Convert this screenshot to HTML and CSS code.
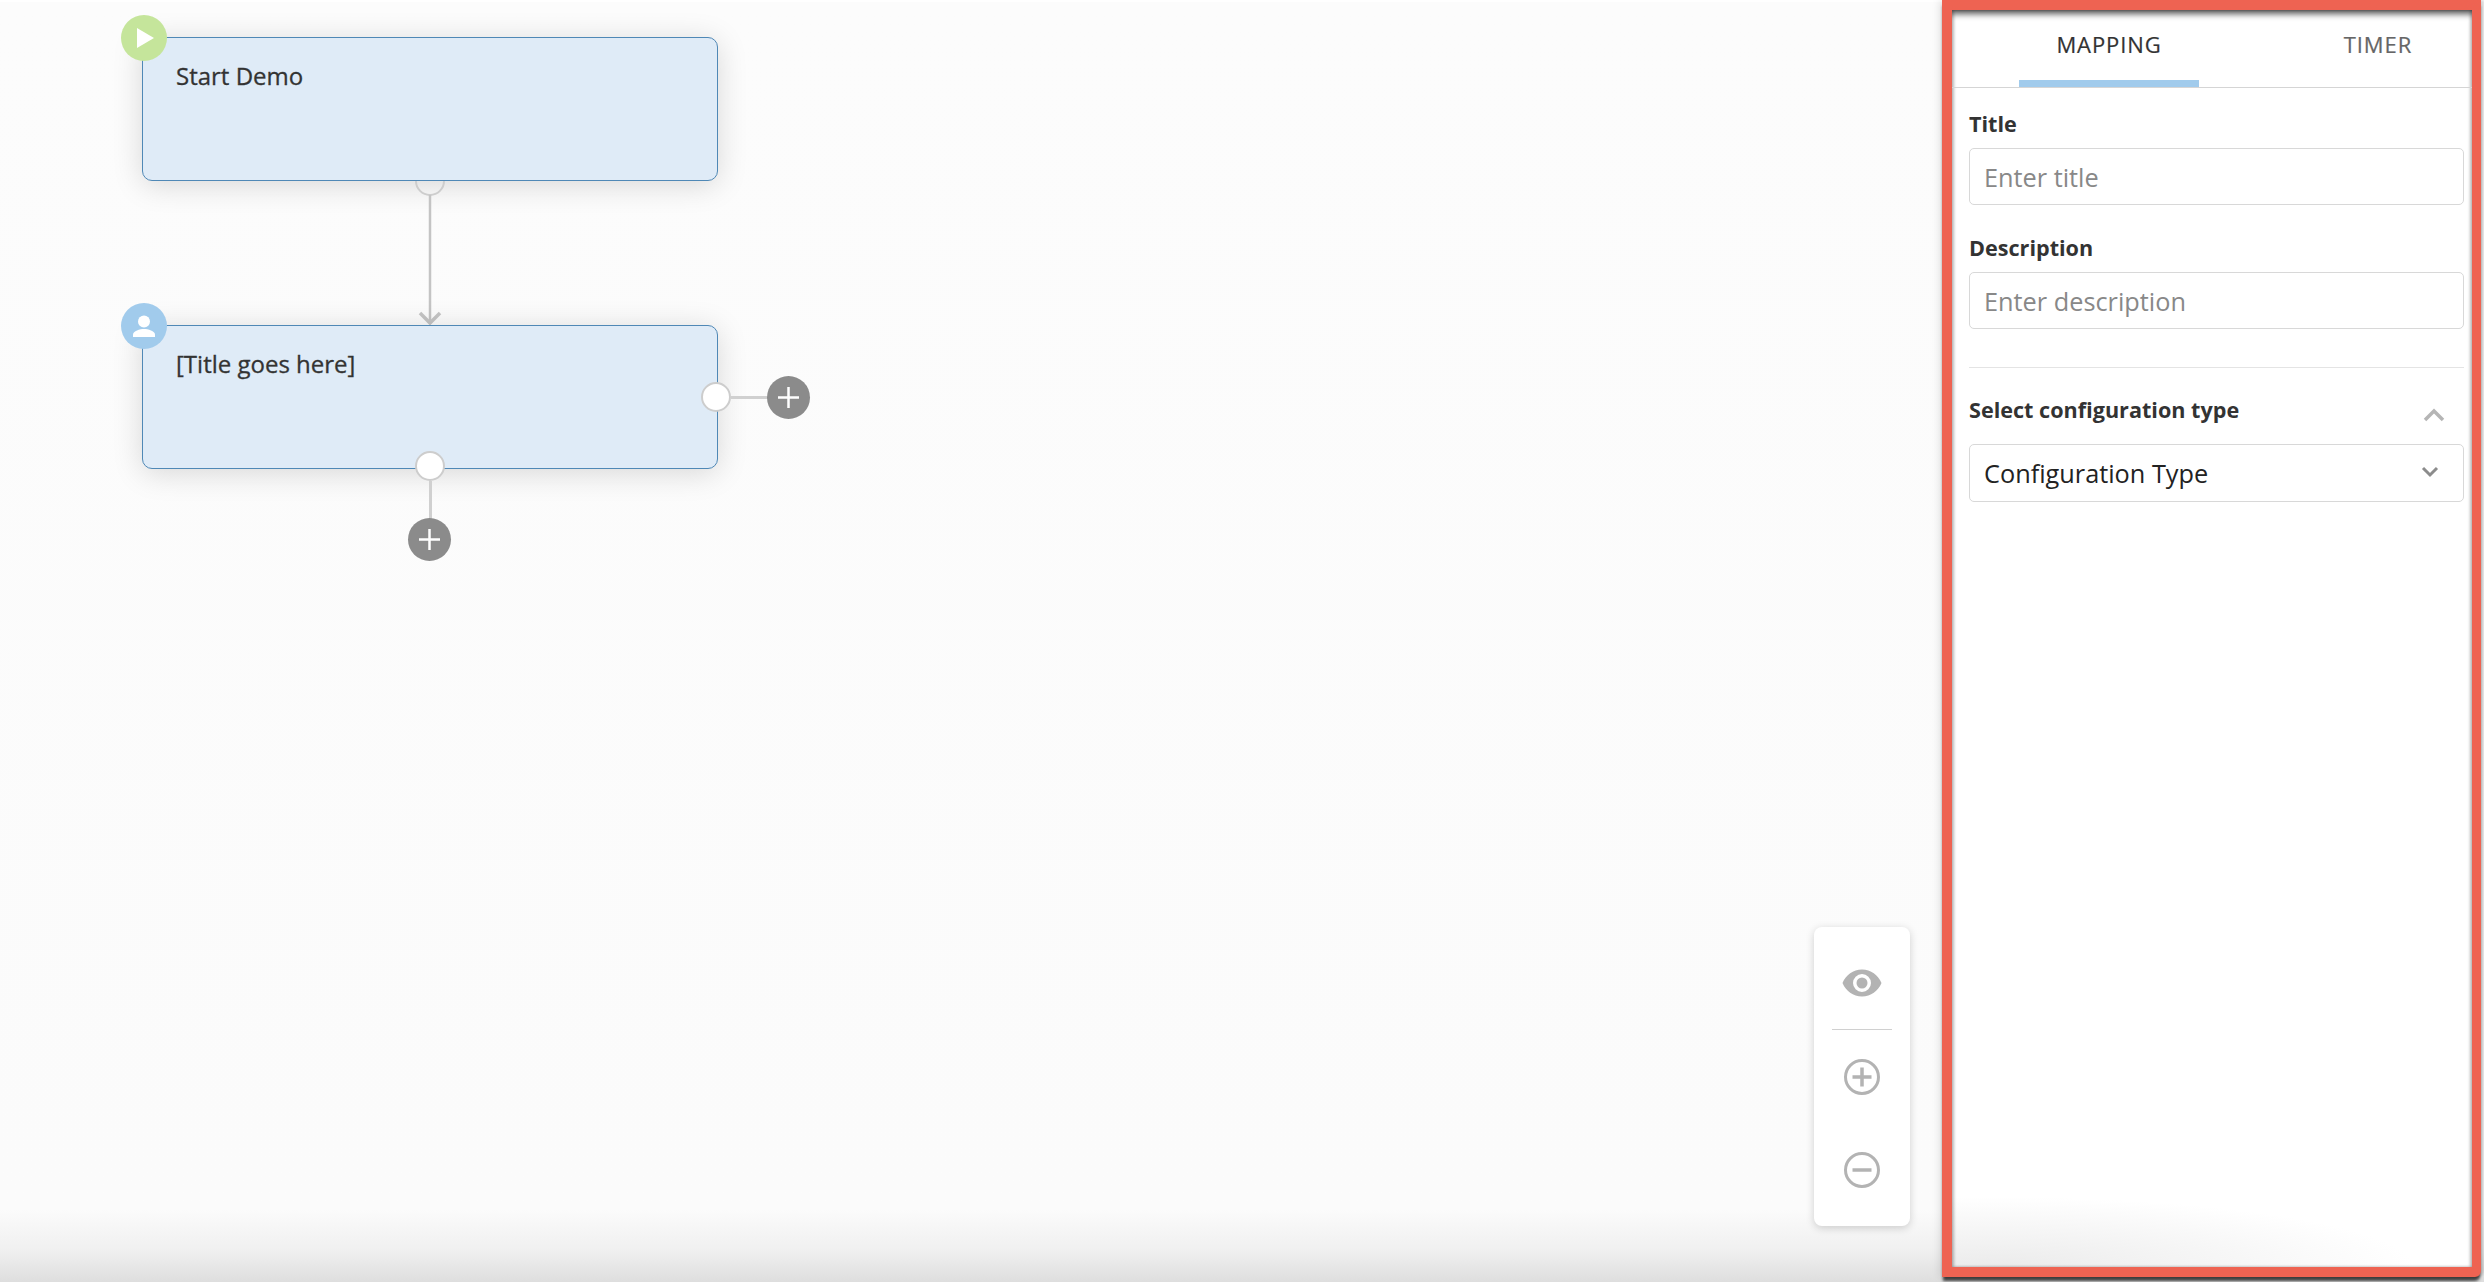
FILE: index.html
```html
<!DOCTYPE html>
<html lang="en">
<head>
<meta charset="UTF-8" />
<title>Flow editor</title>
<link rel="stylesheet" href="styles.css">
</head>
<body>
  <div class="page">
    <main class="canvas">
      <!-- nodes sit on a free canvas -->
      <div class="card card-start">
        <span class="badge badge-green">
          <svg width="46" height="46" viewBox="0 0 46 46"><polygon points="16,13 16,33 33,23" fill="#fff"/></svg>
        </span>
        <span class="card-title">Start Demo</span>
      </div>
      <span class="port port-half"></span>
      <svg class="arrow" width="24" height="132" viewBox="0 0 24 132" fill="none" stroke="#c4c4c4">
        <path d="M12 0V128" stroke-width="2.500"/>
        <path d="M2 118L12 128L22 118" stroke-width="3.500"/>
      </svg>

      <div class="card card-step">
        <span class="badge badge-blue">
          <svg width="46" height="46" viewBox="0 0 46 46" fill="#fff">
            <circle cx="23" cy="18.500" r="6"/>
            <path d="M12 34v-2.500c0-3.500 7-5.500 11-5.500s11 2 11 5.500V34z"/>
          </svg>
        </span>
        <span class="card-title">[Title goes here]</span>
      </div>
      <span class="port port-bottom"></span>
      <span class="wire wire-v"></span>
      <span class="add add-bottom">
        <svg width="43" height="43" viewBox="0 0 43 43"><path d="M21.500 11v21M11 21.500h21" stroke="#fff" stroke-width="2.500"/></svg>
      </span>
      <span class="port port-right"></span>
      <span class="wire wire-h"></span>
      <span class="add add-right">
        <svg width="43" height="43" viewBox="0 0 43 43"><path d="M21.500 11v21M11 21.500h21" stroke="#fff" stroke-width="2.500"/></svg>
      </span>

      <div class="zoom-box">
        <button class="zoom-btn">
          <svg width="40" height="28" viewBox="0 0 40 28"><path fill-rule="evenodd" fill="#b3b3b3" d="M20 0.500C11 0.500 4 6 0.500 14 4 22 11 27.500 20 27.500S36 22 39.500 14C36 6 29 0.500 20 0.500ZM20 23a9 9 0 1 1 0-18 9 9 0 0 1 0 18Z"/><circle cx="20" cy="14" r="5.500" fill="#b3b3b3"/></svg>
        </button>
        <hr class="zoom-line">
        <button class="zoom-btn">
          <svg width="38" height="38" viewBox="0 0 38 38" fill="none" stroke="#b3b3b3"><circle cx="19" cy="19" r="16.500" stroke-width="3"/><path d="M19 9.500v19M9.500 19h19" stroke-width="3.500"/></svg>
        </button>
        <button class="zoom-btn">
          <svg width="38" height="38" viewBox="0 0 38 38" fill="none" stroke="#b3b3b3"><circle cx="19" cy="19" r="16.500" stroke-width="3"/><path d="M9.500 19h19" stroke-width="3.500"/></svg>
        </button>
      </div>
    </main>

    <aside class="panel">
      <div class="tabs">
        <div class="tab tab-active">MAPPING</div>
        <div class="tab">TIMER</div>
      </div>
      <div class="panel-body">
        <label class="field-label">Title</label>
        <div class="text-box placeholder">Enter title</div>
        <label class="field-label label-second">Description</label>
        <div class="text-box placeholder">Enter description</div>
        <hr class="divider">
        <div class="section-head">
          <span class="field-label">Select configuration type</span>
          <svg class="chev-up" width="22" height="14" viewBox="0 0 22 14"><path d="M2 12L11 3L20 12" fill="none" stroke="#b5b5b5" stroke-width="3.500"/></svg>
        </div>
        <div class="text-box select-box">
          <span>Configuration Type</span>
          <svg width="18" height="12" viewBox="0 0 18 12"><path d="M2 2L9 9L16 2" fill="none" stroke="#8c8c8c" stroke-width="3"/></svg>
        </div>
      </div>
    </aside>
  </div>
</body>
</html>
```
FILE: styles.css
```css
/* Reset & base */
* {
  box-sizing: border-box;
}
html, body {
  height: 100%;
  margin: 0;
  font-family: "Open Sans", "Noto Sans", sans-serif;
  color: #333;
}
body {
  background: #fcfcfc;
  overflow: hidden;
}

.page {
  display: flex;
  height: 1282px;
  padding: 0 3px 5px 0;
  background: linear-gradient(to bottom, #fff 0, #fff 2px, #fcfcfc 2px, #fbfbfb 1210px, #f0f0f0 1250px, #dedede 1282px);
}

/* Canvas */
.canvas {
  position: relative;
  flex: 1;
}

.card {
  position: absolute;
  left: 142px;
  width: 576px;
  height: 144px;
  padding: 22px 32px 0 33px;
  background: #dfebf7;
  border: 1.500px solid #4f88b6;
  border-radius: 10px;
  box-shadow: 0 4px 30px rgba(0,0,0,0.15);
}
.card-start {
  top: 37px;
  border-top-left-radius: 0;
}
.card-step {
  top: 325px;
  border-top-left-radius: 0;
}
.card-title {
  display: block;
  font-size: 24px;
  line-height: 32px;
  -webkit-text-stroke: 0.3px #333;
}

.badge {
  position: absolute;
  left: -22px;
  top: -23px;
  width: 46px;
  height: 46px;
  border-radius: 50%;
}
.badge svg {
  display: block;
}
.badge-green {
  background: #c5e59b;
}
.badge-blue {
  background: #a1cbec;
}

.port {
  position: absolute;
  width: 30px;
  height: 30px;
  background: #fff;
  border: 2px solid #cdcdcd;
  border-radius: 50%;
}
.port-half {
  left: 415px;
  top: 166px;
  background: transparent;
  clip-path: inset(15px 0 0 0);
}
.port-bottom {
  left: 415px;
  top: 451px;
}
.port-right {
  left: 701px;
  top: 382px;
}

.arrow {
  position: absolute;
  left: 418px;
  top: 195px;
}

.wire {
  position: absolute;
  background: #d0d0d0;
}
.wire-v {
  left: 429px;
  top: 481px;
  width: 3px;
  height: 38px;
}
.wire-h {
  left: 731px;
  top: 396px;
  width: 38px;
  height: 3px;
}

.add {
  position: absolute;
  width: 43px;
  height: 43px;
  background: #8b8b8b;
  border-radius: 50%;
}
.add svg {
  display: block;
}
.add-bottom {
  left: 408px;
  top: 518px;
}
.add-right {
  left: 767px;
  top: 376px;
}

/* Zoom controls */
.zoom-box {
  position: absolute;
  left: 1814px;
  top: 927px;
  width: 96px;
  height: 299px;
  display: flex;
  flex-direction: column;
  align-items: center;
  padding-top: 36px;
  background: #fff;
  border-radius: 8px;
  box-shadow: 0 2px 8px rgba(0,0,0,0.18);
}
.zoom-btn {
  display: flex;
  justify-content: center;
  align-items: center;
  width: 60px;
  height: 40px;
  padding: 0;
  background: none;
  border: none;
}
.zoom-line {
  width: 60px;
  height: 0;
  margin: 26px 0 27px;
  border: none;
  border-top: 1.500px solid #d0d0d0;
}
.zoom-btn + .zoom-btn {
  margin-top: 53px;
}

/* Side panel */
.panel {
  width: 539px;
  background: #fff;
  border: solid #ee6352;
  border-width: 10px 9px 10px 10px;
  border-radius: 0 0 6px 0;
  box-shadow: -2px 0 8px rgba(0,0,0,0.12), 0 5px 3px -1px rgba(0,0,0,0.7), 3px 0 2px rgba(0,0,0,0.12),
    inset 0 7px 6px -3px rgba(0,0,0,0.65), inset 2px 0 3px rgba(0,0,0,0.2), inset -2px 0 3px rgba(0,0,0,0.2);
  background-image: radial-gradient(ellipse 420px 70px at 8% 100%, #ebebeb 0, rgba(255,255,255,0) 100%);
}

.tabs {
  display: flex;
  height: 78px;
  padding-left: 67px;
  border-bottom: 1.500px solid #d5d5d5;
}
.tab {
  width: 180px;
  height: 77px;
  padding-top: 19px;
  font-size: 22px;
  line-height: 30px;
  letter-spacing: 0.9px;
  text-align: center;
  color: #666;
  -webkit-text-stroke: 0.2px #666;
}
.tab + .tab {
  margin-left: 89px;
}
.tab-active {
  color: #333;
  -webkit-text-stroke-color: #333;
  border-bottom: 7px solid #a1cbec;
}

.panel-body {
  padding: 21px 8px 0 17px;
}

.field-label {
  display: block;
  font-size: 21.600px;
  font-weight: 700;
  line-height: 30px;
}
.label-second {
  margin-top: 28px;
}

.text-box {
  height: 57px;
  margin-top: 9px;
  padding: 1px 14px 0;
  font-size: 25.300px;
  line-height: 55px;
  background: #fff;
  border: 1.500px solid #d8d8d8;
  border-radius: 5px;
}
.placeholder {
  color: #888;
}

.divider {
  height: 0;
  margin: 38px 0 27px;
  border: none;
  border-top: 1.500px solid #e4e4e4;
}

.section-head {
  display: flex;
  justify-content: space-between;
  align-items: center;
  padding-right: 19px;
}
.chev-up {
  margin-top: 9px;
}

.select-box {
  display: flex;
  justify-content: space-between;
  align-items: center;
  height: 58px;
  margin-top: 19px;
  padding: 0 24px 0 14px;
  color: #222;
}
.select-box svg {
  margin-top: -3px;
}
```
